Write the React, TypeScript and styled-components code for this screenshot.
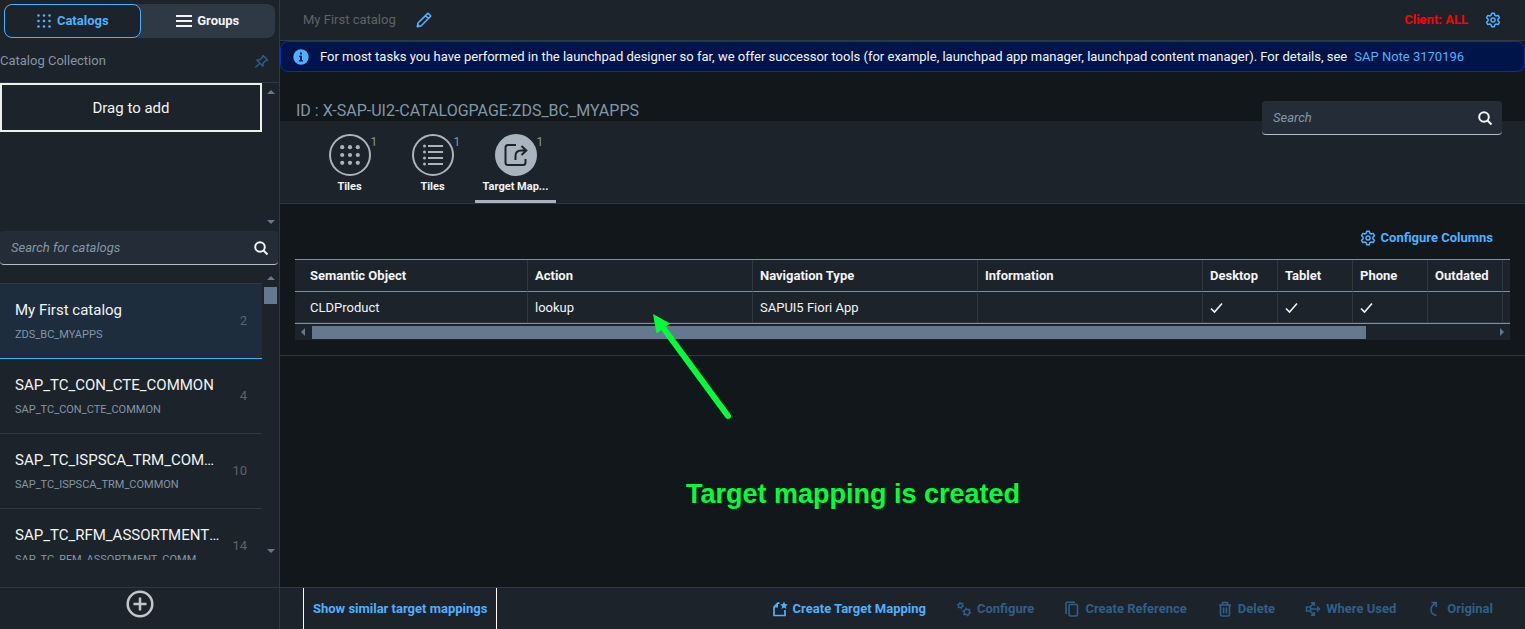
import React from "react";
import styled, { createGlobalStyle, css } from "styled-components";

const c = {
  page: "#12171c",
  panel: "#1d232a",
  line: "#2e3742",
  field: "#242d37",
  text: "#f2f4f5",
  muted: "#8396a8",
  dim: "#5f6266",
  blue: "#4db1ff",
  blueOff: "#2f5f8a",
  scroll: "#647890",
  grey: "#a9b4be",
  tableLine: "#7b8fa5",
};

const Global = createGlobalStyle`
  *, *::before, *::after { box-sizing: border-box; }
  body {
    margin: 0;
    background: ${c.page};
    color: ${c.text};
    font: 13px/16px Roboto, "Liberation Sans", sans-serif;
  }
  button, input { font: inherit; color: inherit; }
  button { border: 0; padding: 0; background: none; cursor: pointer; }
  ul, p, h1, h2 { margin: 0; padding: 0; list-style: none; font-weight: 400; }
`;

const Shell = styled.div`
  display: flex;
  height: 100vh;
  overflow: hidden;
  position: relative;
`;

const Sidebar = styled.aside`
  flex: 0 0 280px;
  display: flex;
  flex-direction: column;
  background: ${c.panel};
  border-right: 1px solid ${c.line};
`;

const Segmented = styled.div`
  display: flex;
  margin: 4px 4px 0;
  height: 34px;
  border-radius: 8px;
  background: #2e3945;
`;

const Segment = styled.button<{ $on?: boolean }>`
  flex: 1;
  display: flex;
  align-items: center;
  justify-content: center;
  gap: 5px;
  border-radius: 8px;
  font-weight: 700;
  ${(p) =>
    p.$on &&
    css`
      color: ${c.blue};
      border: 1px solid ${c.blue};
      background: ${c.panel};
    `}
`;

const CollectionHead = styled.div`
  display: flex;
  align-items: center;
  justify-content: space-between;
  height: 45px;
  padding: 2px 10px 0 0;
  color: ${c.muted};
  border-bottom: 1px solid ${c.line};
`;

const DropArea = styled.div`
  display: flex;
  height: 148px;
`;

const DropBox = styled.div`
  flex: 1;
  height: 49px;
  display: flex;
  align-items: center;
  justify-content: center;
  border: 2px solid #eef0ea;
  font-size: 15px;
`;

const ScrollCol = styled.div<{ $pad: string }>`
  flex: 0 0 17px;
  display: flex;
  flex-direction: column;
  align-items: center;
  padding: ${(p) => p.$pad};
`;

const Arrow = styled.span<{ $dir: "up" | "down" | "left" | "right" }>`
  flex: none;
  border: 4px solid transparent;
  ${(p) =>
    ({
      up: `border-top-width: 0; border-bottom-color: ${c.scroll};`,
      down: `border-bottom-width: 0; border-top-color: ${c.scroll};`,
      left: `border-left-width: 0; border-right-color: ${c.scroll};`,
      right: `border-right-width: 0; border-left-color: ${c.scroll};`,
    })[p.$dir]}
`;

const VThumb = styled.span`
  width: 13px;
  height: 17px;
  margin-top: 7px;
  background: ${c.scroll};
`;

const Spacer = styled.span`
  flex: 1;
`;

const SearchBox = styled.label`
  display: flex;
  align-items: center;
  height: 34px;
  padding: 0 9px 0 11px;
  background: ${c.field};
  border-bottom: 1px solid #b5bec6;
  border-radius: 4px;
  input {
    flex: 1;
    min-width: 0;
    padding: 0;
    border: 0;
    outline: 0;
    background: none;
  }
  input::placeholder {
    color: ${c.muted};
    font-style: italic;
    opacity: 1;
  }
`;

const SideSearch = styled(SearchBox)`
  margin-right: 1px;
`;

const ListArea = styled.div`
  flex: 1;
  min-height: 0;
  display: flex;
  margin-bottom: 27px;
`;

const List = styled.ul`
  flex: 1;
  min-width: 0;
  margin-top: 18px;
  overflow: hidden;
  border-top: 1px solid ${c.line};
`;

const Item = styled.li<{ $on?: boolean }>`
  display: flex;
  align-items: center;
  height: 75px;
  padding: 0 15px;
  border-bottom: 1px solid ${(p) => (p.$on ? c.blue : c.line)};
  background: ${(p) => (p.$on ? "#1d2d3e" : "none")};
`;

const ItemText = styled.div`
  flex: 0 0 208px;
  min-width: 0;
`;

const ItemTitle = styled.p`
  font-size: 15px;
  line-height: 20px;
  overflow: hidden;
  white-space: nowrap;
  text-overflow: ellipsis;
`;

const ItemSub = styled.p`
  margin-top: 8px;
  font-size: 11px;
  line-height: 14px;
  color: ${c.muted};
  overflow: hidden;
  white-space: nowrap;
`;

const Count = styled.span`
  flex: 1;
  text-align: right;
  color: ${c.dim};
`;

const SideFoot = styled.div`
  flex: 0 0 42px;
  display: flex;
  justify-content: center;
  align-items: flex-start;
  padding-top: 2px;
  border-top: 1px solid ${c.line};
`;

const Main = styled.main`
  flex: 1;
  min-width: 0;
  display: flex;
  flex-direction: column;
`;

const Header = styled.header`
  display: flex;
  align-items: center;
  height: 41px;
  padding: 0 24px 0 23px;
  background: ${c.panel};
  border-bottom: 1px solid ${c.line};
  h1 {
    font-size: 13px;
    color: ${c.dim};
    margin-right: 20px;
  }
`;

const Client = styled.strong`
  margin-left: auto;
  margin-right: 17px;
  color: #ff0000;
`;

const Strip = styled.div`
  display: flex;
  align-items: center;
  height: 31px;
  padding-left: 12px;
  background: #00144a;
  border: 1px solid #0032b0;
  border-radius: 8px;
  p { margin: 0 7px 0 11px; }
  a { color: ${c.blue}; text-decoration: none; }
`;

const IdRow = styled.div`
  display: flex;
  justify-content: space-between;
  height: 49px;
  padding: 29px 23px 0 16px;
  h2 {
    font-size: 16px;
    line-height: 20px;
    color: ${c.muted};
  }
`;

const MainSearch = styled(SearchBox)`
  position: relative;
  width: 240px;
`;

const Tabs = styled.nav`
  display: flex;
  height: 83px;
  padding-left: 29px;
  background: ${c.panel};
  border-bottom: 1px solid ${c.line};
`;

const Tab = styled.button<{ $on?: boolean }>`
  flex: 0 0 81px;
  display: flex;
  flex-direction: column;
  align-items: center;
  gap: 4px;
  padding-top: 13px;
  margin-right: 2px;
  font-size: 11px;
  line-height: 14px;
  font-weight: 700;
  border-bottom: 3px solid ${(p) => (p.$on ? c.grey : "transparent")};
`;

const Circle = styled.span<{ $on?: boolean }>`
  position: relative;
  width: 42px;
  height: 42px;
  display: flex;
  align-items: center;
  justify-content: center;
  border: 2px solid ${c.grey};
  border-radius: 50%;
  color: ${(p) => (p.$on ? c.panel : c.grey)};
  background: ${(p) => (p.$on ? c.grey : "none")};
`;

const Badge = styled.span`
  position: absolute;
  left: 40px;
  top: -1px;
  font-size: 12px;
  font-weight: 400;
  color: ${c.muted};
`;

const TableTools = styled.div`
  display: flex;
  justify-content: flex-end;
  padding: 26px 32px 13px;
`;

const Action = styled.button`
  display: flex;
  align-items: center;
  gap: 5px;
  white-space: nowrap;
  font-weight: 700;
  color: ${c.blue};
  &:disabled { color: ${c.blueOff}; cursor: default; }
`;

const TableWrap = styled.div`
  margin: 0 15px;
  background: ${c.panel};
`;

const Table = styled.table`
  width: 100%;
  table-layout: fixed;
  border-collapse: separate;
  border-spacing: 0;
  border-top: 1px solid ${c.tableLine};
  border-bottom: 1px solid ${c.tableLine};
  th, td {
    height: 31px;
    padding: 2px 7px 0;
    text-align: left;
    font-size: 13px;
    white-space: nowrap;
    border-right: 1px solid ${c.line};
    border-bottom: 1px solid ${c.line};
  }
  th {
    height: 32px;
    padding-top: 0;
    border-bottom-color: ${c.tableLine};
  }
  th:first-child, td:first-child { padding-left: 15px; }
  th:last-child, td:last-child { padding: 0; border-right: 0; }
  svg { display: block; }
`;

const Col = styled.col<{ $w?: number }>`
  width: ${(p) => (p.$w ? `${p.$w}px` : "auto")};
`;

const HScroll = styled.div`
  display: flex;
  align-items: center;
  height: 16px;
  padding: 0 6px;
`;

const HTrack = styled.span`
  flex: 1;
  height: 13px;
  margin: 0 4px 0 7px;
`;

const HThumb = styled.span`
  display: block;
  width: 89%;
  height: 100%;
  background: ${c.scroll};
`;

const Rule = styled.div`
  margin-top: 15px;
  border-top: 1px solid ${c.line};
`;

const Footer = styled.footer`
  display: flex;
  align-items: stretch;
  height: 42px;
  margin-top: auto;
  padding: 0 32px 0 23px;
  background: ${c.panel};
  border-top: 1px solid ${c.line};
`;

const Similar = styled(Action)`
  padding: 0 9px;
  border: solid #ffffff;
  border-width: 0 1px;
`;

const Actions = styled.div`
  display: flex;
  gap: 30px;
  margin-left: auto;
`;

const Note = styled.div`
  position: absolute;
  left: 686px;
  top: 478px;
  font: 700 27px/32px "Liberation Sans", sans-serif;
  color: #00ff38;
  white-space: nowrap;
`;

const Pointer = styled.svg`
  position: absolute;
  left: 650px;
  top: 310px;
`;

const Svg = ({ s = 16, w = 2, children }: { s?: number; w?: number; children: React.ReactNode }) => (
  <svg width={s} height={s} viewBox="0 0 16 16" fill="none" stroke="currentColor" strokeWidth={w} aria-hidden="true">
    {children}
  </svg>
);

const GridDots = ({ s = 16, r = 1.3, d = 5.5 }: { s?: number; r?: number; d?: number }) => (
  <Svg s={s} w={0}>
    {[-1, 0, 1].flatMap((y) =>
      [-1, 0, 1].map((x) => <circle key={`${x}${y}`} cx={8 + x * d} cy={8 + y * d} r={r} fill="currentColor" />)
    )}
  </Svg>
);

const Search = () => (
  <Svg>
    <circle cx="7" cy="7" r="4.8" />
    <path d="M10.5 10.5 14.5 14.5" />
  </Svg>
);

const Gear = () => (
  <Svg w={1.5}>
    <path
      strokeLinejoin="round"
      d="M6.7 1.2h2.6l.5 2 1.3.8 2-.6 1.3 2.3-1.5 1.5v1.6l1.5 1.5-1.3 2.3-2-.6-1.3.8-.5 2H6.7l-.5-2-1.3-.8-2 .6-1.3-2.3 1.5-1.5V7.200L1.600 5.700l1.300-2.300 2 .6 1.300-.8z"
    />
    <circle cx="8" cy="8" r="2" />
  </Svg>
);

const smallGear = (x: number, y: number, r: number) => (
  <g>
    <circle cx={x} cy={y} r={r} strokeWidth="1.4" />
    <circle cx={x} cy={y} r={r + 1.1} strokeWidth="1.2" strokeDasharray={`${(r + 1.1) * 0.42} ${(r + 1.1) * 0.627}`} />
  </g>
);

const Check = () => (
  <svg width="14" height="12" viewBox="0 0 14 12" fill="none" stroke="currentColor" strokeWidth="1.6" role="img" aria-label="Yes">
    <path d="M1 6.500 4.500 10 12 1.500" />
  </svg>
);

const catalogs = [
  ["My First catalog", "ZDS_BC_MYAPPS", 2],
  ["SAP_TC_CON_CTE_COMMON", "SAP_TC_CON_CTE_COMMON", 4],
  ["SAP_TC_ISPSCA_TRM_COMMON", "SAP_TC_ISPSCA_TRM_COMMON", 10],
  ["SAP_TC_RFM_ASSORTMENT_COMM", "SAP_TC_RFM_ASSORTMENT_COMM", 14],
] as const;

const headings = ["Semantic Object", "Action", "Navigation Type", "Information", "Desktop", "Tablet", "Phone", "Outdated"];

const footerActions = [
  {
    label: "Create Target Mapping",
    on: true,
    icon: (
      <Svg w={1.7}>
        <path d="M7.500 2.200H5.800L2 6.200v8.300h11V9" />
        <path d="M2 6.500h4V2.200z" fill="currentColor" stroke="none" />
        <path d="m12 .6 1.100 2.500 2.700.3-2 1.800.6 2.700L12 6.500 9.600 7.900l.6-2.700-2-1.800 2.700-.3z" fill="currentColor" stroke="none" />
      </Svg>
    ),
  },
  {
    label: "Configure",
    icon: (
      <Svg w={1.3}>
        {smallGear(4.5, 4.500, 2)}
        {smallGear(10.8, 11, 2.800)}
      </Svg>
    ),
  },
  {
    label: "Create Reference",
    icon: (
      <Svg w={1.6}>
        <rect x="5" y="3.500" width="8.500" height="11.500" rx="1.500" />
        <path d="M2 13V2.500Q2 1.200 3.300 1.200H11" />
      </Svg>
    ),
  },
  {
    label: "Delete",
    icon: (
      <Svg w={1.6}>
        <path d="M2 4h12M5.500 3.800V1.500h5v2.300M3.500 4v9.500Q3.500 15 5 15h6q1.500 0 1.500-1.500V4M6.600 6.500v6M9.400 6.500v6" />
      </Svg>
    ),
  },
  {
    label: "Where Used",
    icon: (
      <Svg w={1.5}>
        <rect x="1.500" y="6" width="4" height="4" />
        <path d="M6 8h7M12 5.500 14.500 8 12 10.500M5.500 5.500 8.500 2.500M6 1.800h3.200V5M5.500 10.500l3 3M6 14.200h3.200V11" />
      </Svg>
    ),
  },
  {
    label: "Original",
    icon: (
      <Svg w={1.6}>
        <path d="M10.500 14.500Q5 13.500 5 8.500 5 5 9.500 2M5.500 1.500h4.700v4.500" />
      </Svg>
    ),
  },
];

export default function App() {
  return (
    <>
      <Global />
      <Shell>
        <Sidebar>
          <Segmented>
            <Segment $on>
              <GridDots />
              Catalogs
            </Segment>
            <Segment>
              <Svg>
                <path d="M0 3h16M0 8h16M0 13h16" />
              </Svg>
              Groups
            </Segment>
          </Segmented>
          <CollectionHead>
            Catalog Collection
            <Svg s={15} w={1.5}>
              <g stroke={c.blueOff}>
                <path d="M9.500 1.500 14.500 6.500 12.500 7 9.800 9.700 9.500 13 3 6.500 6.300 6.200 9 3.500z" strokeLinejoin="round" />
                <path d="M6 10 1.500 14.500" />
              </g>
            </Svg>
          </CollectionHead>
          <DropArea>
            <DropBox>Drag to add</DropBox>
            <ScrollCol $pad="7px 0 7px">
              <Arrow $dir="up" />
              <Spacer />
              <Arrow $dir="down" />
            </ScrollCol>
          </DropArea>
          <SideSearch>
            <input placeholder="Search for catalogs" aria-label="Search for catalogs" />
            <Search />
          </SideSearch>
          <ListArea>
            <List>
              {catalogs.map(([title, sub, n], i) => (
                <Item key={title} $on={i === 0}>
                  <ItemText>
                    <ItemTitle>{title}</ItemTitle>
                    <ItemSub>{sub}</ItemSub>
                  </ItemText>
                  <Count>{n}</Count>
                </Item>
              ))}
            </List>
            <ScrollCol $pad="11px 0 7px">
              <Arrow $dir="up" />
              <VThumb />
              <Spacer />
              <Arrow $dir="down" />
            </ScrollCol>
          </ListArea>
          <SideFoot>
            <button aria-label="Add catalog">
              <svg width="28" height="28" viewBox="0 0 28 28" fill="none" stroke="#c4c6c8" strokeWidth="2.500">
                <circle cx="14" cy="14" r="12.300" />
                <path d="M14 7.500v13M7.500 14h13" />
              </svg>
            </button>
          </SideFoot>
        </Sidebar>

        <Main>
          <Header>
            <h1>My First catalog</h1>
            <Action aria-label="Edit title">
              <Svg w={1.6}>
                <path d="M1.300 14.700 2 11 11.500 1.600q.5-.5 1 0l1.900 1.900q.5.500 0 1L5 14z M9.500 3.600 12.400 6.500" strokeLinejoin="round" />
                <path d="M1 15v-4l4 4z" fill="currentColor" stroke="none" />
              </Svg>
            </Action>
            <Client>Client: ALL</Client>
            <Action aria-label="Settings">
              <Gear />
            </Action>
          </Header>
          <Strip>
            <Svg w={0}>
              <circle cx="8" cy="8" r="7.700" fill={c.blue} />
              <path d="M7 3.500h2v2H7zM6 6.700h3v4.500h1v1.300H6v-1.300h1V8H6z" fill="#00144a" />
            </Svg>
            <p>
              For most tasks you have performed in the launchpad designer so far, we offer successor tools (for example,
              launchpad app manager, launchpad content manager). For details, see
            </p>
            <a href="#note">SAP Note 3170196</a>
          </Strip>
          <IdRow>
            <h2>ID : X-SAP-UI2-CATALOGPAGE:ZDS_BC_MYAPPS</h2>
            <MainSearch>
              <input placeholder="Search" aria-label="Search" />
              <Search />
            </MainSearch>
          </IdRow>
          <Tabs>
            <Tab>
              <Circle>
                <GridDots s={24} r={1.4} d={5.2} />
                <Badge>1</Badge>
              </Circle>
              Tiles
            </Tab>
            <Tab>
              <Circle>
                <svg width="22" height="22" viewBox="0 0 22 22" fill="none" stroke="currentColor" strokeWidth="2">
                  <path d="M6 2h15M6 8h15M6 14h15M6 20h15" />
                  <path d="M2.500 2h.01M2.500 8h.01M2.500 14h.01M2.500 20h.01" strokeWidth="3" strokeLinecap="round" />
                </svg>
                <Badge>1</Badge>
              </Circle>
              Tiles
            </Tab>
            <Tab $on>
              <Circle $on>
                <svg width="24" height="24" viewBox="0 0 24 24" fill="none" stroke="currentColor" strokeWidth="2">
                  <path d="M12 2H4Q1.500 2 1.500 4.500V19.500Q1.500 22 4 22H19Q21.500 22 21.500 19.500V16" />
                  <path d="M11.500 17V13Q11.500 7.500 17 7.500H22M17.500 3 22.300 7.500 17.500 12" />
                </svg>
                <Badge>1</Badge>
              </Circle>
              Target Map...
            </Tab>
          </Tabs>
          <TableTools>
            <Action>
              <Gear />
              Configure Columns
            </Action>
          </TableTools>
          <TableWrap>
            <Table>
              <colgroup>
                <Col $w={233} />
                <Col />
                <Col />
                <Col />
                <Col $w={75} />
                <Col $w={75} />
                <Col $w={75} />
                <Col $w={75} />
                <Col $w={7} />
              </colgroup>
              <thead>
                <tr>
                  {headings.map((h) => (
                    <th key={h}>{h}</th>
                  ))}
                  <th />
                </tr>
              </thead>
              <tbody>
                <tr>
                  <td>CLDProduct</td>
                  <td>lookup</td>
                  <td>SAPUI5 Fiori App</td>
                  <td />
                  <td><Check /></td>
                  <td><Check /></td>
                  <td><Check /></td>
                  <td />
                  <td />
                </tr>
              </tbody>
            </Table>
            <HScroll>
              <Arrow $dir="left" />
              <HTrack>
                <HThumb />
              </HTrack>
              <Arrow $dir="right" />
            </HScroll>
          </TableWrap>
          <Rule />
          <Footer>
            <Similar>Show similar target mappings</Similar>
            <Actions>
              {footerActions.map((a) => (
                <Action key={a.label} disabled={!a.on}>
                  {a.icon}
                  {a.label}
                </Action>
              ))}
            </Actions>
          </Footer>
        </Main>

        <Pointer width="84" height="112" viewBox="0 0 84 112" fill="#00ff38" aria-hidden="true">
          <path d="M78 106 14 19" stroke="#00ff38" strokeWidth="6" strokeLinecap="round" />
          <path d="M3 4 20 13.500 6.500 23.500z" />
        </Pointer>
        <Note>Target mapping is created</Note>
      </Shell>
    </>
  );
}
